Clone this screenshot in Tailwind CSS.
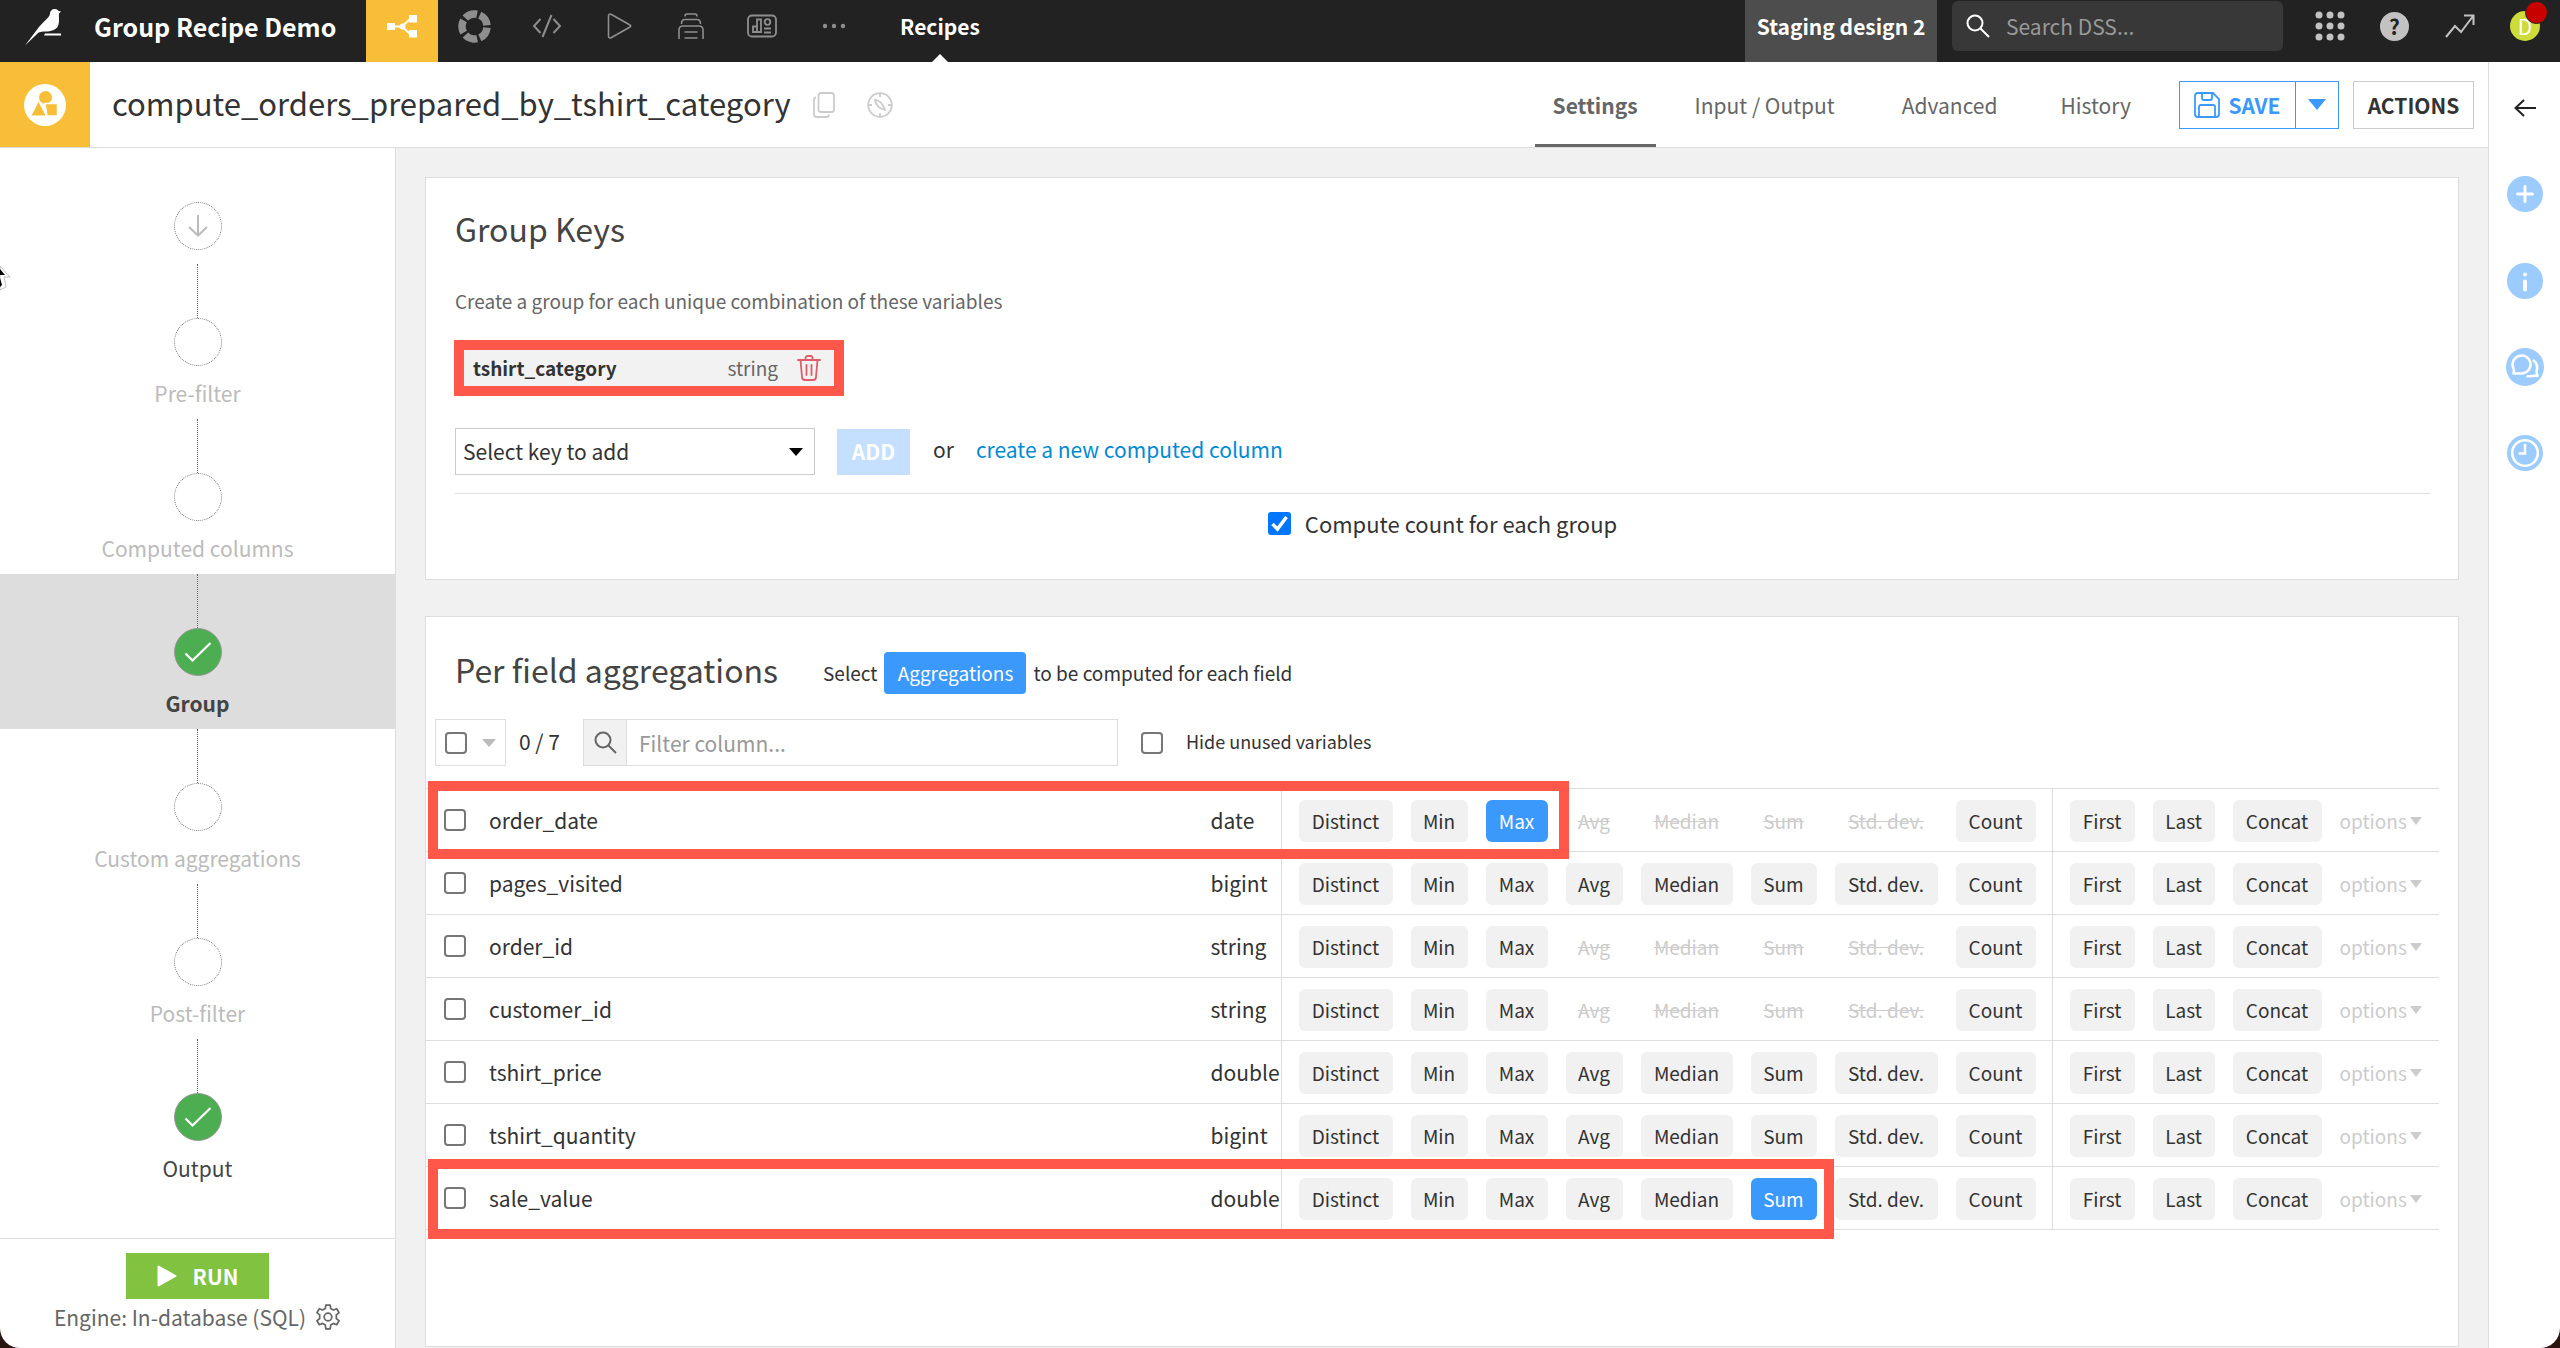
<!DOCTYPE html>
<html lang="en" class="bg-[#2a1410]">
<head>
  <meta charset="UTF-8">
  <meta name="viewport" content="width=device-width, initial-scale=1.0">
  <title>Group Recipe Demo</title>
  <script src="https://cdn.jsdelivr.net/npm/@tailwindcss/browser@4"></script>
</head>
<body class="relative flex h-screen flex-col overflow-hidden rounded-b-[20px] bg-white font-['Noto_Sans_CJK_SC',sans-serif] text-[21px] leading-[30px] text-[#333]">

  <!-- Top navigation -->
  <header class="flex h-[62px] shrink-0 items-stretch bg-[#222] text-white">
    <a href="#" aria-label="Home" class="ml-6 flex w-[38px] items-start pt-2">
      <svg width="38" height="38" viewBox="0 0 38 38" fill="#fff"><path d="M1 37.500L15 19C20 13 25 10 26 6C26 3 28 1 31 1c2 0 3 1 3.500 2l2.500 .5-2 2C34.500 10 36 13 34 18c-2 4-7 5.500-13 5.500-5 0-7 1-9 3.500z"/><path d="M21 25.500h16v2H20z"/></svg>
    </a>
    <h1 class="ml-8 w-[272px] pt-[11px] text-[25px] font-bold">Group Recipe Demo</h1>
    <nav class="flex items-stretch text-[#8e8e8e]">
      <button aria-label="Flow" class="flex w-[72px] justify-center bg-[#f9be38] pt-[15px]">
        <svg width="30" height="23" viewBox="0 0 30 23" fill="#fff" stroke="#fff"><path d="M7 11.500h8L23 4M15 11.500L23 19" fill="none" stroke-width="2"/><circle cx="15.500" cy="11.500" r="3" stroke="none"/><path stroke="none" d="M0 8h8v7H0zM22 0h8v7.500h-8zM22 15h8v7.500h-8z"/></svg>
      </button>
      <button aria-label="Lab" class="flex w-[73px] justify-center pt-[10px]">
        <svg width="33" height="33" viewBox="0 0 33 33"><circle cx="16.500" cy="16.500" r="12.500" fill="none" stroke="currentColor" stroke-width="7.500" stroke-dasharray="12.900 2.808" transform="rotate(5 16.500 16.500)"/></svg>
      </button>
      <button aria-label="Code" class="flex w-[72px] justify-center pt-[14px]">
        <svg width="30" height="24" viewBox="0 0 30 24" fill="none" stroke="currentColor" stroke-width="2"><path d="M8.500 5L2 12l6.500 7M21.500 5L28 12l-6.500 7M19.500 1l-9 22"/></svg>
      </button>
      <button aria-label="Jobs" class="flex w-[72px] justify-center pt-[13px]">
        <svg width="25" height="26" viewBox="0 0 25 26" fill="none" stroke="currentColor" stroke-width="1.600" stroke-linejoin="round"><path d="M1.500 3C1.500 1 3 .5 4.500 1.500L23 12c1 .5 1 1.500 0 2L4.500 24.500C3 25.500 1.500 25 1.500 23z"/></svg>
      </button>
      <button aria-label="Scenarios" class="flex w-[71px] justify-center pt-[13px]">
        <svg width="26" height="27" viewBox="0 0 26 27" fill="none" stroke="currentColor" stroke-width="1.600"><path d="M7 3.500C7 1.500 8 1 9 1h8c1 0 2 .5 2 2.500M3.500 11C3.500 8 4.500 6.500 7 6.500h12c2.500 0 3.500 1.500 3.500 4.500M1 26V17c0-2.500 1-4 4-4h16c3 0 4 1.500 4 4v9M6.500 19h13M6.500 25h13"/></svg>
      </button>
      <button aria-label="Dashboards" class="flex w-[72px] justify-center pt-[14px]">
        <svg width="30" height="24" viewBox="0 0 30 24" fill="none" stroke="currentColor" stroke-width="1.800"><rect x="1" y="1.500" width="28" height="21" rx="4"/><path d="M6 18v-5.500h4V18zM10 18V5.500h4V18zM17 14.500h7M17 18.500h7"/><circle cx="20.500" cy="8" r="2.800"/></svg>
      </button>
      <button aria-label="More" class="flex w-[72px] justify-center pt-[23px]">
        <svg width="24" height="6" viewBox="0 0 24 6" fill="currentColor"><circle cx="3" cy="3" r="2.200"/><circle cx="12" cy="3" r="2.200"/><circle cx="21" cy="3" r="2.200"/></svg>
      </button>
    </nav>
    <a href="#" class="relative ml-7 w-[84px] pt-[11px] text-center font-bold">Recipes
      <span class="absolute bottom-0 left-1/2 -ml-2 border-x-8 border-b-8 border-x-transparent border-b-white"></span>
    </a>
    <div class="ml-auto w-[192px] bg-[#4d4d4d] pt-[11px] text-center font-bold">Staging design 2</div>
    <label class="mt-px ml-[15px] flex h-[50px] w-[331px] items-center rounded-md bg-[#383838] pl-[14px]">
      <svg width="24" height="24" viewBox="0 0 24 24" fill="none" stroke="#fff" stroke-width="2"><circle cx="9" cy="9" r="7.500"/><path d="M14.500 14.500L23 23"/></svg>
      <input type="text" aria-label="Search" placeholder="Search DSS..." class="ml-4 w-[250px] outline-none placeholder:text-[#999]">
    </label>
    <div class="flex h-[52px] items-center text-[#c2c2c2]">
      <button aria-label="Applications" class="ml-8">
        <svg width="30" height="30" viewBox="0 0 30 30" fill="currentColor"><circle cx="4" cy="4" r="3.500"/><circle cx="15" cy="4" r="3.500"/><circle cx="26" cy="4" r="3.500"/><circle cx="4" cy="15" r="3.500"/><circle cx="15" cy="15" r="3.500"/><circle cx="26" cy="15" r="3.500"/><circle cx="4" cy="26" r="3.500"/><circle cx="15" cy="26" r="3.500"/><circle cx="26" cy="26" r="3.500"/></svg>
      </button>
      <button aria-label="Help" class="ml-[35px] size-[29px] rounded-full bg-[#c2c2c2] text-[21px] leading-[29px] font-bold text-[#222]">?</button>
      <button aria-label="Activity" class="ml-9">
        <svg width="30" height="24" viewBox="0 0 30 24" fill="none" stroke="currentColor" stroke-width="2"><path d="M1 23L10 12l6 6L28.500 1.500M19 1.500h9.500V11"/></svg>
      </button>
      <button class="relative mr-5 ml-[35px] size-[30px] rounded-full bg-[#cddc39] text-[21px] leading-[30px] text-white">D
        <span class="absolute -top-[10px] left-[15px] size-[23px] rounded-full border border-[#222] bg-[#c80000]"></span>
      </button>
    </div>
  </header>

  <div class="flex min-h-0 flex-1">
    <div class="flex min-w-0 flex-1 flex-col">

      <!-- Recipe title bar -->
      <div class="flex h-[86px] shrink-0 items-stretch border-b border-[#ddd]">
        <div class="flex w-[90px] items-center justify-center bg-[#f9be38]">
          <svg width="42" height="42" viewBox="0 0 42 42"><circle cx="21" cy="21" r="21" fill="#fff"/><g fill="#f9be38"><circle cx="21.500" cy="13.500" r="6.500"/><path d="M7.500 31.500L14.500 18l7 13.500z"/><path stroke="#fff" stroke-width="1.500" d="M21 19.500h12.500v12.500H23z"/></g></svg>
        </div>
        <h2 class="ml-[22px] pt-[17px] text-[31px] leading-[48px]">compute_orders_prepared_by_tshirt_category</h2>
        <button aria-label="Copy" class="ml-[22px]">
          <svg width="22" height="26" viewBox="0 0 22 26" fill="none" stroke="#ccc" stroke-width="1.800"><rect x="5.500" y="1" width="15.500" height="19" rx="2.500"/><path d="M3 5.500C1.500 5.500 1 6.500 1 8v14c0 2 1 3 3 3h9c2 0 3-.5 3-2.500"/></svg>
        </button>
        <button aria-label="Explore" class="ml-8">
          <svg width="26" height="26" viewBox="0 0 26 26" fill="none" stroke="#ccc" stroke-width="1.800"><circle cx="13" cy="13" r="11.800"/><path d="M13 1v4M13 21v4M1 13h4M21 13h4M8 8c4 0 8 4 10 10-4-1-9-4-10-10z"/></svg>
        </button>
        <nav class="ml-auto flex text-[#666]">
          <a href="#" class="flex w-[121px] items-center justify-center border-b-3 border-[#666] pt-[3px] font-bold">Settings</a>
          <a href="#" class="ml-[39px] flex items-center">Input / Output</a>
          <a href="#" class="ml-[67px] flex items-center">Advanced</a>
          <a href="#" class="ml-[63px] flex items-center">History</a>
        </nav>
        <div class="ml-12 flex h-[48px] self-center border border-[#3b99fc] font-bold text-[#3b99fc]">
          <button class="flex w-[115px] items-center justify-center gap-2">
            <svg width="26" height="26" viewBox="0 0 26 26" fill="none" stroke="currentColor" stroke-width="1.800"><path d="M4 1h15l6 6v15c0 2-1 3-3 3H4c-2 0-3-1-3-3V4c0-2 1-3 3-3zM8 1v5c0 1 1 2 2 2h6c1 0 2-1 2-2V1M5 25V15c0-1 1-2 2-2h12c1 0 2 1 2 2v10"/></svg>
            SAVE
          </button>
          <button aria-label="Save options" class="flex w-[43px] items-center justify-center border-l border-[#3b99fc]">
            <svg width="18" height="11" viewBox="0 0 18 11" fill="currentColor"><path d="M0 0h18l-9 11z"/></svg>
          </button>
        </div>
        <button class="mr-[14px] ml-[14px] h-[48px] w-[121px] self-center border border-[#ccc] font-bold">ACTIONS</button>
      </div>

      <div class="flex min-h-0 flex-1">
        <!-- Steps -->
        <aside class="flex w-[396px] shrink-0 flex-col border-r border-[#ddd]">
          <div class="mx-auto mt-[54px] flex size-[48px] shrink-0 items-center justify-center rounded-full border border-dotted border-[#777]">
            <svg width="20" height="22" viewBox="0 0 20 22" fill="none" stroke="#bbb" stroke-width="2"><path d="M10 0v20M1 12l9 8.500 9-8.500"/></svg>
          </div>
          <ol id="steps" class="mt-[14px] text-[#bbb]"></ol>
          <div class="mt-auto flex h-[110px] flex-col items-center border-t border-[#ddd] pt-[14px] text-[#666]">
            <button class="flex h-[46px] w-[143px] items-center justify-center gap-4 bg-[#81c241] font-bold text-white">
              <svg width="20" height="22" viewBox="0 0 20 22" fill="#fff" stroke="#fff" stroke-width="2" stroke-linejoin="round"><path d="M1.500 1.500l17 9.500-17 9.500z"/></svg>
              RUN
            </button>
            <div class="mt-[3px] flex items-center gap-[9px]">Engine: In-database (SQL)
              <button aria-label="Engine settings">
                <svg width="26" height="26" viewBox="0 0 24 24" fill="none" stroke="#666" stroke-width="1.600" stroke-linejoin="round"><circle cx="12" cy="12" r="3.500"/><path d="M9.500 4.200L10 1h4l.5 3.200 2.500 1.400 3-1.200 2.200 3.600-2.500 2v3.500l2.500 2-2.200 3.600-3-1.200-2.500 1.500L14 23h-4l-.5-3.600L7 17.900l-3 1.200-2.200-3.600 2.500-2V10l-2.500-2L4 4.400l3 1.200z"/></svg>
              </button>
            </div>
          </div>
        </aside>

        <main class="flex min-w-0 flex-1 flex-col bg-[#f1f1f1] px-[29px] pt-[29px]">
          <!-- Group keys -->
          <section class="h-[403px] shrink-0 border border-[#ddd] bg-white pr-7 pl-[29px]">
            <h3 class="mt-[26px] text-[32px] leading-[48px] text-[#444]">Group Keys</h3>
            <p class="mt-[34px] text-[19px] text-[#666]">Create a group for each unique combination of these variables</p>
            <div class="mt-[24px] -ml-px flex h-[56px] w-[390px] items-center border-10 border-[#ff584a] bg-[#f2f2f2] pr-[13px] pl-[9px] text-[19px]">
              <span class="font-bold">tshirt_category</span>
              <span class="ml-auto text-[#666]">string</span>
              <button aria-label="Remove key" class="ml-[19px]">
                <svg width="24" height="26" viewBox="0 0 24 26" fill="none" stroke="#e05c6c" stroke-width="1.800" stroke-linecap="round"><path d="M1 5h22M8.500 5V3c0-1 1-2 2-2h3c1 0 2 1 2 2v2M3.500 5l1.500 17c0 2 1 3 3 3h8c2 0 3-1 3-3L20.500 5M9.500 10v10M14.500 10v10"/></svg>
              </button>
            </div>
            <div class="mt-[32px] flex h-[47px] items-center">
              <div class="relative h-full w-[360px]">
                <select aria-label="Select key to add" class="size-full appearance-none border border-[#ccc] bg-white pb-[2px] pl-[7px]">
                  <option>Select key to add</option>
                </select>
                <svg class="pointer-events-none absolute top-5 right-3" width="14" height="8" viewBox="0 0 14 8"><path d="M0 0h14L7 8z"/></svg>
              </div>
              <button class="ml-[22px] h-[46px] w-[73px] bg-[#c4dfff] pb-[2px] font-bold text-white">ADD</button>
              <span class="ml-[23px] pb-[5px]">or</span>
              <a href="#" class="ml-[22px] pb-[5px] text-[#028bd2]">create a new computed column</a>
            </div>
            <div class="mt-[18px] flex justify-center border-t border-[#ddd] pt-[14px]">
              <label class="flex items-center gap-[14px] text-[22px]">
                <span class="relative flex">
                  <input type="checkbox" checked class="size-[23px] appearance-none rounded-[3px] bg-[#0075ff]">
                  <svg class="pointer-events-none absolute top-0 left-0" width="23" height="23" viewBox="0 0 23 23" fill="none" stroke="#fff" stroke-width="3.500"><path d="M4.500 12l5 5L18.500 5"/></svg>
                </span>
                Compute count for each group
              </label>
            </div>
          </section>

          <!-- Aggregations -->
          <section class="mt-[36px] mb-px flex-1 border border-[#ddd] bg-white">
            <div class="mt-[35px] ml-[29px] flex h-[42px] items-center text-[19px]">
              <h3 class="pb-[8px] text-[32px] leading-[48px] text-[#444]">Per field aggregations</h3>
              <span class="ml-[45px]">Select</span>
              <button class="mx-[7px] h-[42px] w-[142px] rounded bg-[#3b99fc] text-white">Aggregations</button>
              <span>to be computed for each field</span>
            </div>
            <div class="mt-[25px] ml-[9px] flex h-[47px] items-center">
              <div class="flex h-full w-[71px] items-center border border-[#ddd] pl-[9px]">
                <input type="checkbox" aria-label="Select all" class="size-[22px] appearance-none rounded-[4px] border-2 border-[#767676]">
                <svg class="ml-[15px]" width="14" height="8" viewBox="0 0 14 8" fill="#bbb"><path d="M0 0h14L7 8z"/></svg>
              </div>
              <span class="ml-[13px] w-[64px] pb-[3px]">0 / 7</span>
              <label class="flex h-full w-[535px] border border-[#ddd]">
                <span class="flex w-[43px] items-center justify-center border-r border-[#ddd] bg-[#f1f1f1]">
                  <svg width="23" height="23" viewBox="0 0 23 23" fill="none" stroke="#666" stroke-width="2"><circle cx="9" cy="9" r="7.500"/><path d="M14.500 14.500L22 22"/></svg>
                </span>
                <input type="text" aria-label="Filter column" placeholder="Filter column..." class="w-[480px] pl-3 outline-none placeholder:text-[#999]">
              </label>
              <input type="checkbox" id="hideUnused" class="ml-[23px] size-[22px] appearance-none rounded-[4px] border-2 border-[#767676]">
              <label for="hideUnused" class="ml-[23px] pb-[3px] text-[18px]">Hide unused variables</label>
            </div>
            <div class="mt-[22px] mr-[19px]">
              <table class="w-full table-fixed border-t border-[#ddd]">
                <tbody id="fields"></tbody>
              </table>
            </div>
          </section>
        </main>
      </div>
    </div>

    <!-- Right rail -->
    <aside class="flex w-[72px] shrink-0 flex-col items-center border-l border-[#ddd] pt-[37px]">
      <button aria-label="Open panel">
        <svg width="22" height="18" viewBox="0 0 22 18" fill="none" stroke="#222" stroke-width="2"><path d="M22 9H1M10 1L1.500 9l8.500 8"/></svg>
      </button>
      <button aria-label="Add" class="mt-[59px]">
        <svg width="36" height="36" viewBox="0 0 36 36" stroke="#fff" stroke-width="3" stroke-linecap="round"><circle cx="18" cy="18" r="18" fill="#9bcbff" stroke="none"/><path d="M18 10.500v15M10.500 18h15"/></svg>
      </button>
      <button aria-label="Details" class="mt-[51px]">
        <svg width="36" height="36" viewBox="0 0 36 36" fill="none" stroke="#fff" stroke-width="4" stroke-linecap="round"><circle cx="18" cy="18" r="18" fill="#9bcbff" stroke="none"/><path d="M18 18.500v8M18 11.500v.1"/></svg>
      </button>
      <button aria-label="Discussions" class="mt-[49px]">
        <svg width="38" height="38" viewBox="0 0 38 38" fill="none" stroke="#fff" stroke-width="2.500" stroke-linejoin="round"><circle cx="19" cy="19" r="19" fill="#9bcbff" stroke="none"/><path d="M7.500 25.500c.5-2 .8-3 0-5A9 9 0 1 1 16 25.500c-3 .3-5 0-8.500 0z"/><path d="M27 12c4 3 5 7 3.500 11 0 2 .5 3 1 5-4-.8-7 .8-11 0" stroke-width="2.500"/></svg>
      </button>
      <button aria-label="Timeline" class="mt-[49px]">
        <svg width="36" height="36" viewBox="0 0 36 36" fill="none" stroke="#fff" stroke-width="2.600"><circle cx="18" cy="18" r="18" fill="#9bcbff" stroke="none"/><circle cx="18" cy="18" r="12.800"/><path d="M18 9v9.500h-6.500"/></svg>
      </button>
    </aside>
  </div>

  <!-- Mouse pointer leaving the left edge -->
  <svg class="absolute top-[265px] left-0" width="12" height="28" viewBox="0 0 12 28"><path d="M0 1l10 11H4l2 10-6 3z" fill="#fff" stroke="#999" stroke-width=".6"/><path d="M0 4l5 6H0zM0 13l2 7-2 2z" fill="#000"/></svg>

  <script>
    const steps = [
      { name: 'Pre-filter' },
      { name: 'Computed columns' },
      { name: 'Group', done: true, current: true },
      { name: 'Custom aggregations' },
      { name: 'Post-filter' },
      { name: 'Output', done: true },
    ];

    const check = '<svg width="28" height="20" viewBox="0 0 28 20" fill="none" stroke="#fff" stroke-width="2.200"><path d="M1.500 11.500l7 7L26.500 1"/></svg>';

    document.getElementById('steps').innerHTML = steps.map(step => `
      <li class="flex h-[155px] flex-col items-center ${step.current ? 'bg-[#ddd] font-bold text-[#444]' : step.done ? 'text-[#444]' : ''}">
        <span class="h-[54px] border-l border-dotted border-[#666]"></span>
        <span class="flex size-[48px] items-center justify-center rounded-full border ${step.done ? 'border-[#999] bg-[#4cae50]' : 'border-dotted border-[#777]'}">${step.done ? check : ''}</span>
        <span class="mt-[12px]">${step.name}</span>
      </li>`).join('');

    const fields = [
      { name: 'order_date', type: 'date', active: 'Max' },
      { name: 'pages_visited', type: 'bigint' },
      { name: 'order_id', type: 'string' },
      { name: 'customer_id', type: 'string' },
      { name: 'tshirt_price', type: 'double' },
      { name: 'tshirt_quantity', type: 'bigint' },
      { name: 'sale_value', type: 'double', active: 'Sum' },
    ];

    // label and button width
    const stats = [
      ['Distinct', 'w-[94px]'], ['Min', 'w-[57px]'], ['Max', 'w-[62px]'], ['Avg', 'w-[57px]'],
      ['Median', 'w-[92px]'], ['Sum', 'w-[66px]'], ['Std. dev.', 'w-[103px]'], ['Count', 'w-[80px]'],
    ];
    const picks = [['First', 'w-[65px]'], ['Last', 'w-[62px]'], ['Concat', 'w-[89px]']];
    const numericOnly = ['Avg', 'Median', 'Sum', 'Std. dev.'];

    // outline round the configured part of a row
    const highlight = {
      order_date: '<span class="pointer-events-none absolute -top-[8px] left-[2px] h-[78px] w-[1141px] border-10 border-[#ff584a]"></span>',
      sale_value: '<span class="pointer-events-none absolute -top-[8px] left-[2px] h-[80px] w-[1406px] border-10 border-[#ff584a]"></span>',
    };

    function chip([label, width], field) {
      const off = numericOnly.includes(label) && (field.type === 'date' || field.type === 'string');
      const look = label === field.active ? 'bg-[#3b99fc] text-white' : off ? 'text-[#ccc] line-through' : 'bg-[#f1f1f1]';
      return `<button ${off ? 'disabled' : ''} class="${width} h-[42px] shrink-0 rounded-md pb-px text-center whitespace-nowrap ${look}">${label}</button>`;
    }

    document.getElementById('fields').innerHTML = fields.map(field => `
      <tr class="relative h-[63px] border-b border-[#ddd]">
        <td class="border-r border-[#ddd] p-0">
          <div class="flex items-center pl-[18px]">
            <input type="checkbox" id="${field.name}" class="size-[22px] appearance-none rounded-[4px] border-2 border-[#767676]">
            <label for="${field.name}" class="ml-[23px]">${field.name}</label>
            <span class="ml-auto w-[70px]">${field.type}</span>
          </div>
          ${highlight[field.name] || ''}
        </td>
        <td class="w-[771px] border-r border-[#ddd] p-0">
          <div class="flex gap-[18px] pt-[2px] pl-[17px] text-[19px]">${stats.map(s => chip(s, field)).join('')}</div>
        </td>
        <td class="w-[387px] p-0">
          <div class="flex items-center gap-[18px] pt-[2px] pl-[17px] text-[19px]">
            ${picks.map(p => chip(p, field)).join('')}
            <button class="flex items-center gap-[3px] text-[#ccc]">options
              <svg width="12" height="8" viewBox="0 0 12 8" fill="currentColor"><path d="M0 0h12L6 8z"/></svg>
            </button>
          </div>
        </td>
      </tr>`).join('');
  </script>
</body>
</html>
